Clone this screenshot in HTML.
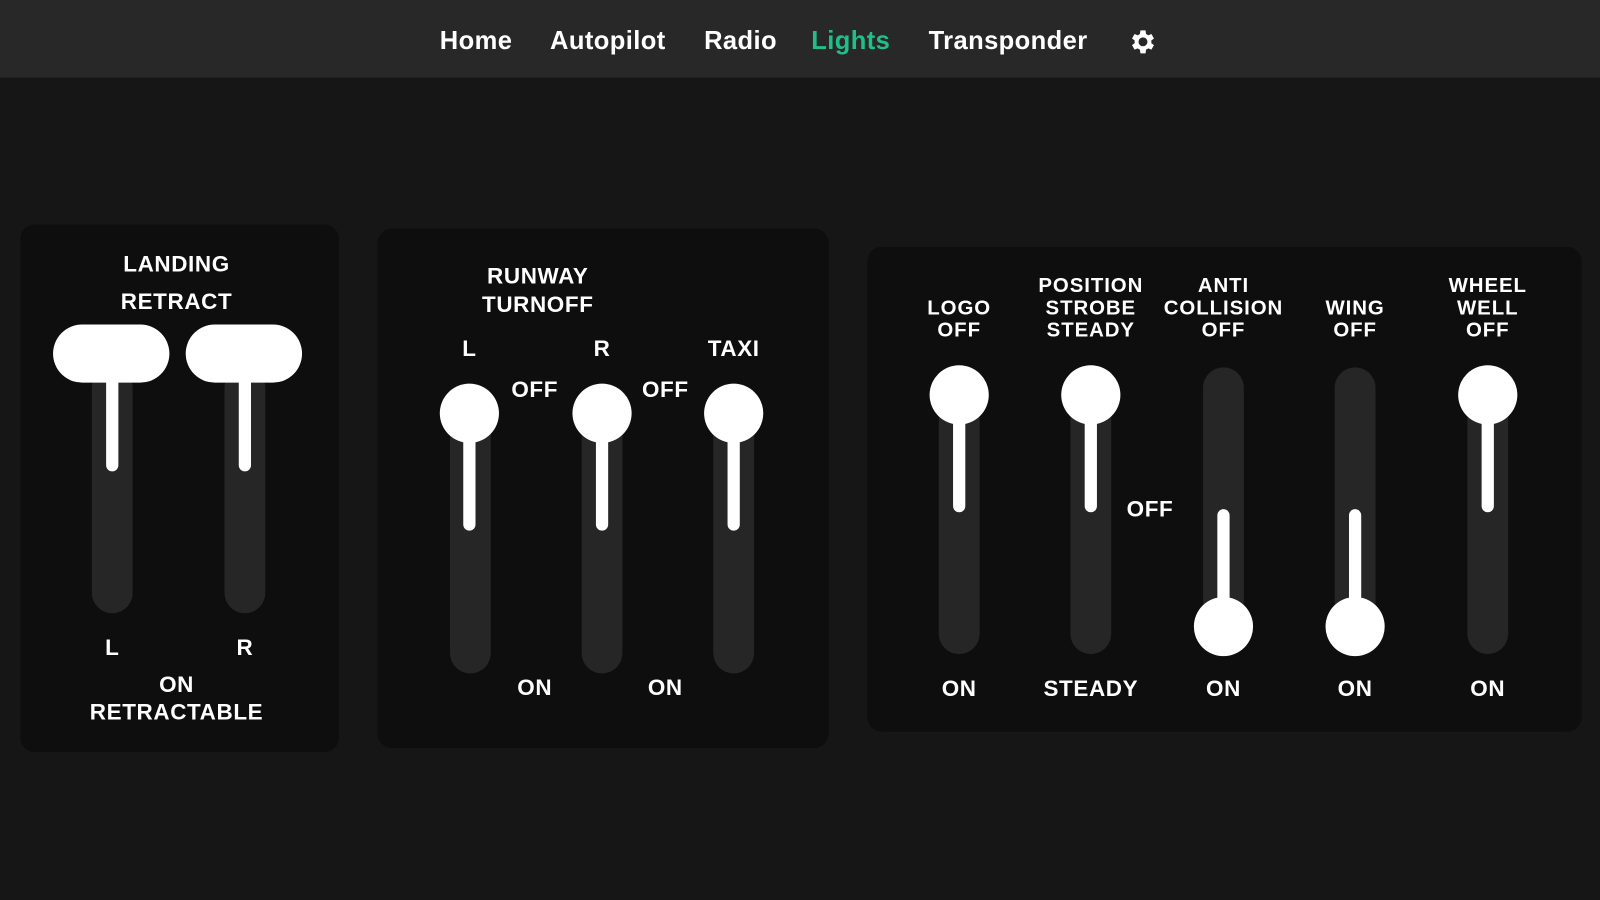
<!DOCTYPE html>
<html><head><meta charset="utf-8"><style>
html,body{margin:0;padding:0;background:#161616;width:1600px;height:900px;overflow:hidden}
#w{position:absolute;left:0;top:0;width:1568px;height:882px;transform:scale(1.020408);transform-origin:0 0;font-family:"Liberation Sans",sans-serif;font-weight:bold;color:#fff}
.nav{position:absolute;left:0;top:0;width:1568px;height:76px;background:#282828}
.nav span{position:absolute;top:26px;font-size:25px;letter-spacing:0.4px}
.p{position:absolute;background:#0e0e0e;border-radius:14px}
.t{position:absolute;transform:translate(-50%,-50%);font-size:22px;letter-spacing:0.6px;white-space:nowrap;text-align:center;line-height:22px}
.s{font-size:20px;line-height:22px;letter-spacing:0.9px}
.tr{position:absolute;width:40px;background:#262626;border-radius:20px}
.st{position:absolute;width:12px;background:#fff;border-radius:6px}
.k{position:absolute;width:58px;height:58px;background:#fff;border-radius:50%}
.pill{position:absolute;width:114px;height:57px;background:#fff;border-radius:29px}
</style></head><body><div id="w">
<div class="nav">
<span style="left:431px">Home</span>
<span style="left:539px">Autopilot</span>
<span style="left:690px">Radio</span>
<span style="left:795px;color:#1fbf8a">Lights</span>
<span style="left:910px">Transponder</span>
<svg style="position:absolute;left:1104px;top:26px" width="30" height="30" viewBox="0 0 24 24"><path fill="#fff" d="M19.4 13a7.5 7.5 0 0 0 0-2l2.1-1.6-2-3.5-2.5 1a7.5 7.5 0 0 0-1.700-1L14.9 3h-4l-.4 2.9a7.5 7.5 0 0 0-1.7 1l-2.5-1-2 3.5L6.4 11a7.5 7.5 0 0 0 0 2l-2.1 1.6 2 3.5 2.5-1a7.5 7.5 0 0 0 1.7 1l.4 2.9h4l.4-2.9a7.5 7.5 0 0 0 1.7-1l2.5 1 2-3.5zM12.9 15.5a3.5 3.5 0 1 1 0-7 3.5 3.5 0 0 1 0 7z"/></svg>
</div>

<div class="p" style="left:20px;top:220px;width:312px;height:517px"></div>
<div class="t" style="left:173px;top:259px">LANDING</div>
<div class="t" style="left:173px;top:296px">RETRACT</div>
<div class="tr" style="left:90px;top:360px;height:241px"></div>
<div class="tr" style="left:220px;top:360px;height:241px"></div>
<div class="st" style="left:104px;top:360px;height:102px"></div>
<div class="st" style="left:234px;top:360px;height:102px"></div>
<div class="pill" style="left:52px;top:318px"></div>
<div class="pill" style="left:182px;top:318px"></div>
<div class="t" style="left:110px;top:635px">L</div>
<div class="t" style="left:240px;top:635px">R</div>
<div class="t" style="left:173px;top:671px">ON</div>
<div class="t" style="left:173px;top:698px">RETRACTABLE</div>

<div class="p" style="left:370px;top:224px;width:442px;height:509px"></div>
<div class="t" style="left:527px;top:271px">RUNWAY</div>
<div class="t" style="left:527px;top:299px">TURNOFF</div>
<div class="t" style="left:460px;top:342px">L</div>
<div class="t" style="left:590px;top:342px">R</div>
<div class="t" style="left:719px;top:342px">TAXI</div>
<div class="tr" style="left:441px;top:400px;height:260px"></div>
<div class="tr" style="left:570px;top:400px;height:260px"></div>
<div class="tr" style="left:699px;top:400px;height:260px"></div>
<div class="st" style="left:454px;top:410px;height:110px"></div>
<div class="st" style="left:584px;top:410px;height:110px"></div>
<div class="st" style="left:713px;top:410px;height:110px"></div>
<div class="k" style="left:431px;top:376px"></div>
<div class="k" style="left:561px;top:376px"></div>
<div class="k" style="left:690px;top:376px"></div>
<div class="t" style="left:524px;top:382px">OFF</div>
<div class="t" style="left:652px;top:382px">OFF</div>
<div class="t" style="left:524px;top:674px">ON</div>
<div class="t" style="left:652px;top:674px">ON</div>

<div class="p" style="left:850px;top:242px;width:700px;height:475px"></div>
<div class="t s" style="left:940px;top:313px">LOGO<br>OFF</div>
<div class="t s" style="left:1069px;top:302px">POSITION<br>STROBE<br>STEADY</div>
<div class="t s" style="left:1199px;top:302px">ANTI<br>COLLISION<br>OFF</div>
<div class="t s" style="left:1328px;top:313px">WING<br>OFF</div>
<div class="t s" style="left:1458px;top:302px">WHEEL<br>WELL<br>OFF</div>
<div class="tr" style="left:920px;top:360px;height:281px"></div>
<div class="tr" style="left:1049px;top:360px;height:281px"></div>
<div class="tr" style="left:1179px;top:360px;height:281px"></div>
<div class="tr" style="left:1308px;top:360px;height:281px"></div>
<div class="tr" style="left:1438px;top:360px;height:281px"></div>
<div class="st" style="left:934px;top:390px;height:112px"></div>
<div class="st" style="left:1063px;top:390px;height:112px"></div>
<div class="st" style="left:1193px;top:499px;height:112px"></div>
<div class="st" style="left:1322px;top:499px;height:112px"></div>
<div class="st" style="left:1452px;top:390px;height:112px"></div>
<div class="k" style="left:911px;top:358px"></div>
<div class="k" style="left:1040px;top:358px"></div>
<div class="k" style="left:1170px;top:585px"></div>
<div class="k" style="left:1299px;top:585px"></div>
<div class="k" style="left:1429px;top:358px"></div>
<div class="t" style="left:1127px;top:499px">OFF</div>
<div class="t" style="left:940px;top:675px">ON</div>
<div class="t" style="left:1069px;top:675px">STEADY</div>
<div class="t" style="left:1199px;top:675px">ON</div>
<div class="t" style="left:1328px;top:675px">ON</div>
<div class="t" style="left:1458px;top:675px">ON</div>
</div></body></html>
